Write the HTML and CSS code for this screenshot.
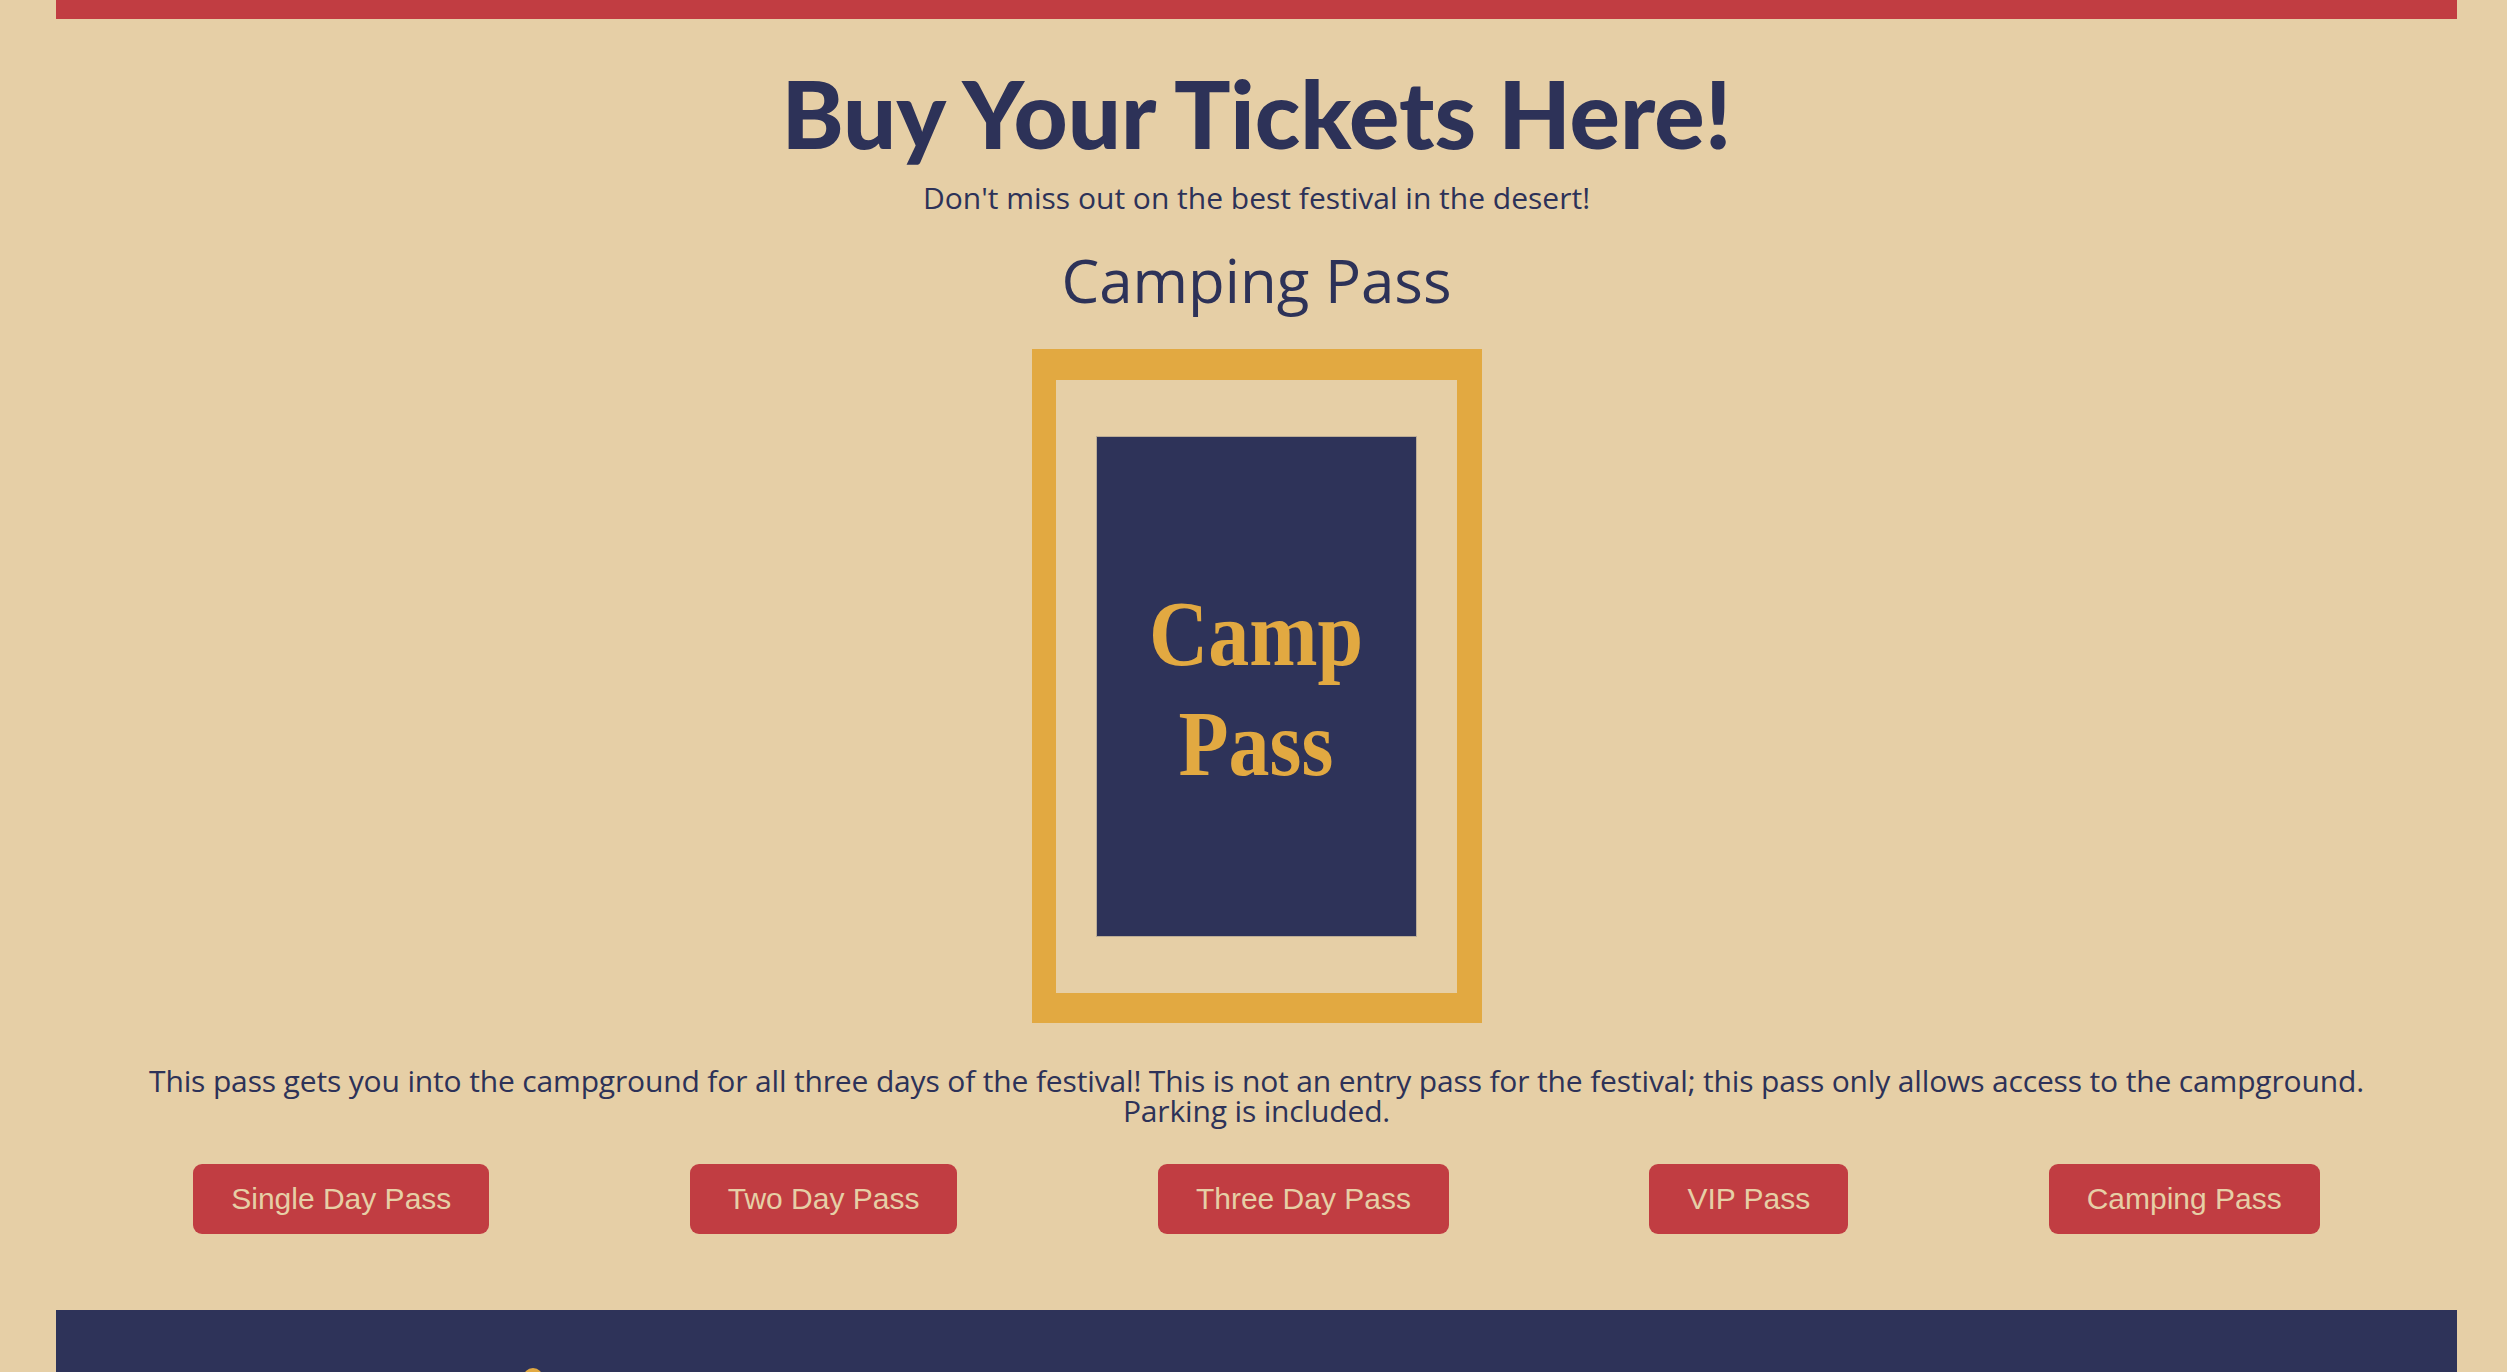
FILE: index.html
```html
<!DOCTYPE html>
<html lang="en">
<head>
<meta charset="utf-8">
<title>Buy Your Tickets Here!</title>
<link rel="stylesheet" href="styles.css">
</head>
<body>
<div class="page">
  <div class="topbar"></div>
  <main class="tickets">
    <h1 class="title">Buy Your Tickets Here!</h1>
    <p class="subtitle">Don't miss out on the best festival in the desert!</p>
    <h2 class="pass-name">Camping Pass</h2>
    <div class="pass-frame">
      <div class="pass-card">
        <div class="pass-text">
          <span>Camp</span>
          <span>Pass</span>
        </div>
      </div>
    </div>
    <p class="pass-desc">This pass gets you into the campground for all three days of the festival! This is not an entry pass for the festival; this pass only allows access to the campground. Parking is included.</p>
    <div class="pass-buttons">
      <button class="pass-btn">Single Day Pass</button>
      <button class="pass-btn">Two Day Pass</button>
      <button class="pass-btn">Three Day Pass</button>
      <button class="pass-btn">VIP Pass</button>
      <button class="pass-btn">Camping Pass</button>
    </div>
  </main>
  <footer class="footer">
    <div class="footer-col footer-logo"><span class="sun"></span></div>
    <div class="footer-col"></div>
    <div class="footer-col footer-social"><span class="social-dot"></span></div>
  </footer>
</div>
</body>
</html>
```

FILE: styles.css
```css
html, body {
  margin: 0;
  padding: 0;
  background: #e6cfa6;
}

body {
  color: #2d3258;
  font-family: "Open Sans", "Noto Sans", sans-serif;
  overflow: hidden;
}

.page {
  padding: 0 50px 0 56px;
}

.topbar {
  height: 19px;
  background: #c13d42;
}

.tickets {
  display: flex;
  flex-direction: column;
  align-items: center;
}

.title {
  margin: 40px 0 0;
  font-family: "Lato", "Open Sans", sans-serif;
  font-weight: 900;
  font-size: 94px;
  line-height: 108px;
  letter-spacing: 0;
  color: #2d3258;
}

.subtitle {
  margin: 13px 0 0;
  font-size: 30px;
  font-weight: 400;
  line-height: 36px;
}

.pass-name {
  margin: 28px 0 0;
  font-size: 60px;
  font-weight: 400;
  line-height: 72px;
}

.pass-frame {
  margin-top: 33px;
  box-sizing: border-box;
  width: 450px;
  height: 674px;
  border-style: solid;
  border-color: #e2a941;
  border-width: 31px 25px 30px 24px;
  padding: 57px 41px;
  background: #e6cfa6;
}

.pass-card {
  height: 100%;
  background: #2e3359;
  box-shadow: 0 0 0 1px rgba(160, 150, 140, 0.6);
  display: flex;
  align-items: center;
  justify-content: center;
}

.pass-text {
  display: flex;
  flex-direction: column;
  align-items: center;
  font-family: "Liberation Serif", "Times New Roman", serif;
  font-weight: 700;
  font-size: 82px;
  line-height: 96px;
  color: #e2a941;
  transform: translateY(2px) scaleY(1.14);
}

.pass-desc {
  margin: 43px 0 0;
  padding: 0 60px;
  text-align: center;
  font-size: 30px;
  line-height: 30px;
  letter-spacing: -0.15px;
}

.pass-buttons {
  align-self: stretch;
  display: flex;
  justify-content: space-around;
  padding: 0 37px;
  margin-top: 38px;
}

.pass-btn {
  font-family: "Liberation Sans", Arial, sans-serif;
  font-size: 30px;
  line-height: 36px;
  padding: 17px 38px;
  border: none;
  border-radius: 9px;
  background: #c13d42;
  color: #e6cfa6;
}

.footer {
  margin-top: 76px;
  height: 200px;
  background: #2e3359;
  display: grid;
  grid-template-columns: 1fr 1fr 1fr;
  padding-top: 58px;
  box-sizing: border-box;
}

.footer-logo {
  padding-left: 467px;
}

.sun {
  display: block;
  width: 20px;
  height: 20px;
  border-radius: 50%;
  background: #e2a941;
}

.footer-social {
  display: flex;
  justify-content: center;
  padding-top: 4px;
  padding-left: 30px;
}

.social-dot {
  display: block;
  width: 14px;
  height: 14px;
  background: #6b6f80;
  border-radius: 2px;
}
```
